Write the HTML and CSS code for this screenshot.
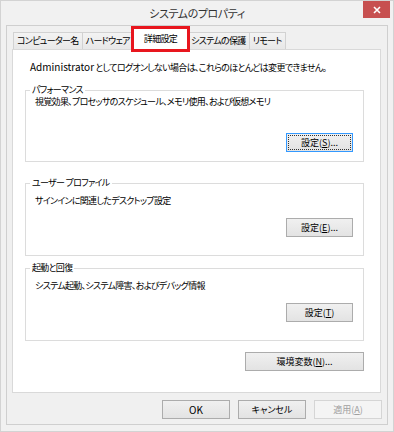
FILE: index.html
```html
<!DOCTYPE html>
<html lang="ja">
  <head>
    <meta charset="UTF-8" />
    <meta name="viewport" content="width=device-width, initial-scale=1.0" />
    <title>システムのプロパティ</title>
    <link rel="stylesheet" href="styles.css">
  </head>
  <body>
    <div class="window">
      <div class="titlebar">
        <span></span>
        <span class="title">システムのプロパティ</span>
        <button class="close" aria-label="閉じる">
          <svg width="8" height="8" viewBox="0 0 8 8">
            <path d="M1 1L7 7M7 1L1 7" stroke="#fff" stroke-width="1.6" fill="none" />
          </svg>
        </button>
      </div>
      <div class="client">
        <div class="tabs">
          <div class="tab">コンピューター名</div>
          <div class="tab">ハードウェア</div>
          <div class="tab active">詳細設定</div>
          <div class="tab">システムの保護</div>
          <div class="tab">リモート</div>
        </div>
        <div class="panel">
          <p class="note"><span class="latin">Administrator</span> としてログオンしない場合は、これらのほとんどは変更できません。</p>
          <fieldset class="group perf">
            <legend>パフォーマンス</legend>
            <p class="desc">視覚効果、プロセッサのスケジュール、メモリ使用、および仮想メモリ</p>
            <div class="row"><button class="btn focus">設定(<u>S</u>)...</button></div>
          </fieldset>
          <fieldset class="group profile">
            <legend>ユーザー プロファイル</legend>
            <p class="desc">サインインに関連したデスクトップ設定</p>
            <div class="row"><button class="btn">設定(<u>E</u>)...</button></div>
          </fieldset>
          <fieldset class="group startup">
            <legend>起動と回復</legend>
            <p class="desc">システム起動、システム障害、およびデバッグ情報</p>
            <div class="row"><button class="btn">設定(<u>T</u>)</button></div>
          </fieldset>
          <div class="row env"><button class="btn wide">環境変数(<u>N</u>)...</button></div>
        </div>
        <div class="actions">
          <button class="btn action"><span class="latin">OK</span></button>
          <button class="btn action">キャンセル</button>
          <button class="btn action" disabled>適用(<u>A</u>)</button>
        </div>
      </div>
    </div>
  </body>
</html>
```

FILE: styles.css
```css
body {
  margin: 0;
  font-family: "Noto Sans CJK JP", "Noto Sans", sans-serif;
  font-size: 9px;
  letter-spacing: -0.7px;
  font-feature-settings: "palt";
  color: #000;
}
.latin {
  font-size: 10px;
  letter-spacing: 0;
}
.window {
  width: 394px;
  height: 432px;
  box-sizing: border-box;
  background: #f1f1f1;
  border: 1px solid #d3d3d3;
  padding: 0 5px 7px;
}
.titlebar {
  height: 24px;
  display: grid;
  grid-template-columns: 1fr auto 1fr;
  align-items: start;
}
.title {
  font-size: 11px;
  letter-spacing: -0.4px;
  line-height: 25px;
  color: #333;
}
.close {
  justify-self: end;
  width: 27px;
  height: 17px;
  margin-right: -2px;
  padding: 0;
  border: none;
  background: #c75050;
  display: flex;
  align-items: center;
  justify-content: center;
}
.client {
  background: #f0f0f0;
  border: 1px solid #cfcfcf;
  padding: 0 0 5px;
}
.tabs {
  display: flex;
  align-items: flex-end;
  margin-left: 6px;
}
.tab {
  height: 17px;
  box-sizing: border-box;
  padding: 0 3px;
  line-height: 16px;
  border: 1px solid #d2d2d2;
  border-bottom: none;
  background: linear-gradient(#f3f3f3, #e8e8e8);
  white-space: nowrap;
}
.tab + .tab {
  margin-left: -1px;
}
.tab.active {
  position: relative;
  z-index: 1;
  height: 26px;
  margin: 0 -2px -3px -3px;
  padding: 0 10px;
  line-height: 20px;
  border: 3px solid #e8161e;
  background: #fff;
}
.panel {
  position: relative;
  margin: 0 6px 0 5px;
  background: #fff;
  border: 1px solid #d9d9d9;
  padding: 0 16px 21px 12px;
}
.note {
  margin: 11px 0 10px 5px;
  line-height: 12px;
  white-space: nowrap;
}
.group {
  margin: 0;
  min-width: 0;
  border: 1px solid #dcdcdc;
  padding: 0 10px 18px 4px;
}
.group legend {
  padding: 0 2px;
  line-height: 12px;
}
.desc {
  margin: 6px 0 0;
  padding-left: 5px;
  line-height: 12px;
}
.row {
  display: flex;
  justify-content: flex-end;
  margin-top: 11px;
}
.perf {
  padding-bottom: 9px;
}
.perf .desc {
  margin-top: 0;
}
.perf .row {
  margin-top: 25px;
}
.profile {
  margin-top: 15px;
}
.startup {
  margin-top: 6px;
}
.btn {
  width: 67px;
  height: 19px;
  box-sizing: border-box;
  padding: 0;
  font: inherit;
  line-height: 17px;
  color: #000;
  border: 1px solid #acacac;
  background: linear-gradient(#f0f0f0, #e3e3e3);
}
.btn.focus {
  border-color: #3399ff;
  outline: 1px dotted #333;
  outline-offset: -3px;
}
.btn.wide {
  width: 119px;
}
.actions {
  display: flex;
  justify-content: flex-end;
  gap: 8px;
  margin: 7px 5px 0 0;
}
.btn.action {
  width: 68px;
}
.btn:disabled {
  color: #a0a0a0;
  border-color: #d5d5d5;
  background: #f4f4f4;
}
```
